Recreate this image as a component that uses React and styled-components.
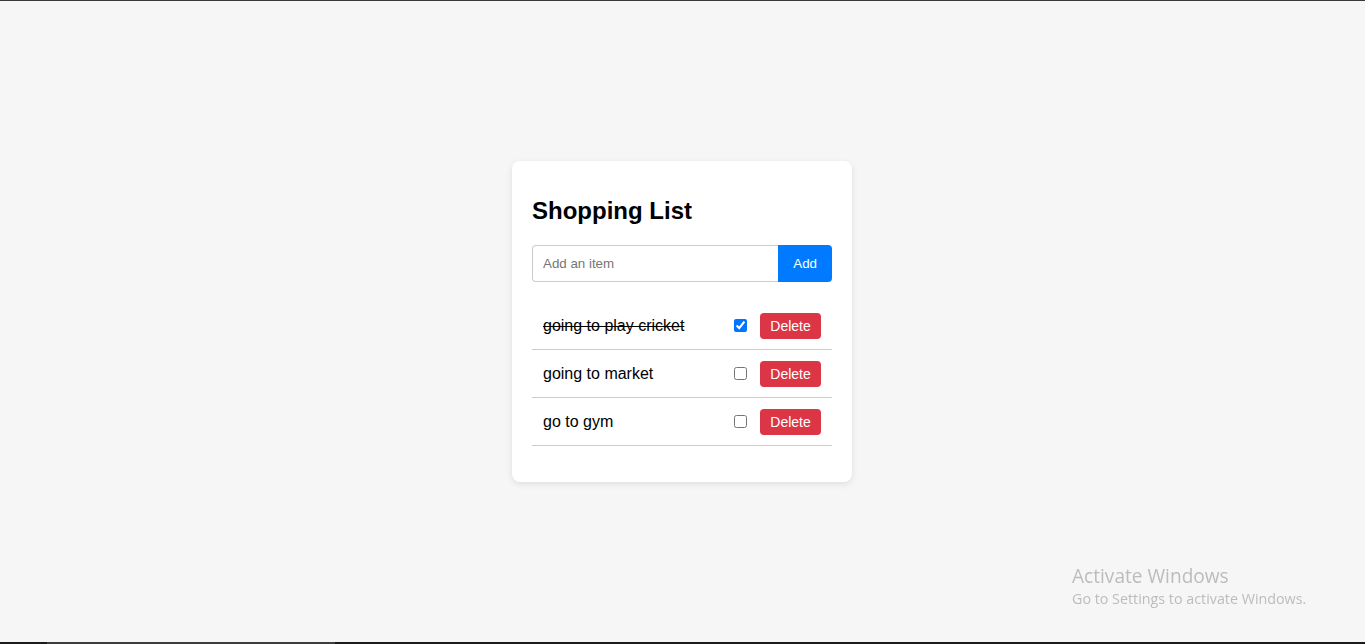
import React, { useState } from "react";
import styled, { createGlobalStyle } from "styled-components";

const Global = createGlobalStyle`
  * { box-sizing: border-box; }
  html, body { margin: 0; padding: 0; }
  body { background: #f6f6f6; font-family: "Liberation Sans", Arial, sans-serif; }
`;

const Screen = styled.div`
  height: 100vh;
  display: flex;
  flex-direction: column;
  background: #f6f6f6;
`;

const TopEdge = styled.div`
  height: 1px;
  background: #3a3a3a;
  flex: none;
`;

const BottomEdge = styled.div`
  height: 2px;
  flex: none;
  background: linear-gradient(to right, #1b1b1b 0 47px, #3e3e3e 47px 335px, #1b1b1b 335px);
`;

const Main = styled.main`
  flex: 1;
  display: flex;
  align-items: center;
  justify-content: center;
  padding: 0 1px 0 0;
`;

const Card = styled.div`
  width: 340px;
  background: #fff;
  border-radius: 8px;
  padding: 20px;
  box-shadow: 0 2px 6px rgba(0, 0, 0, 0.1);
`;

const Title = styled.h2`
  margin: 16px 0 20px;
  font-size: 24px;
  font-weight: bold;
  color: #000;
`;

const Form = styled.form`
  display: flex;
`;

const Input = styled.input`
  flex: 1;
  padding: 10px;
  font-family: "Liberation Sans", Arial, sans-serif;
  font-size: 13.33px;
  border: 1px solid #ccc;
  border-right: none;
  border-radius: 4px 0 0 4px;
  outline: none;
  color: #000;
  &::placeholder { color: #757575; }
`;

const AddButton = styled.button`
  padding: 10px 15px;
  border: none;
  background: #007bff;
  color: #fff;
  font-family: "Liberation Sans", Arial, sans-serif;
  font-size: 13.33px;
  border-radius: 0 4px 4px 0;
  cursor: pointer;
`;

const List = styled.ul`
  list-style: none;
  margin: 20px 0 16px;
  padding: 0;
`;

const Row = styled.li`
  display: flex;
  align-items: center;
  height: 48px;
  padding: 0 11px 0 10px;
  border-bottom: 1px solid #ccc;
`;

const ItemText = styled.span`
  flex: 1;
  font-size: 16px;
  color: #000;
  padding-left: 1px;
  text-decoration: ${(p) => (p.$done ? "line-through" : "none")};
`;

const Check = styled.input`
  width: 13px;
  height: 13px;
  margin: 3px 3px 3px 4px;
`;

const DeleteButton = styled.button`
  margin-left: 10px;
  width: 61px;
  height: 26px;
  padding: 0;
  border: none;
  border-radius: 4px;
  background: #dc3545;
  color: #fff;
  font-family: "Liberation Sans", Arial, sans-serif;
  font-size: 14px;
  cursor: pointer;
`;

const Watermark = styled.div`
  position: fixed;
  left: 1072px;
  top: 564px;
  color: #bcbcbc;
  font-family: "Open Sans", "Noto Sans", sans-serif;
  pointer-events: none;
`;

const WmTitle = styled.div`
  font-size: 19.1px;
  line-height: 25px;
`;

const WmSub = styled.div`
  font-size: 14.3px;
  line-height: 20px;
`;

export default function App() {
  const [items, setItems] = useState([
    { id: 1, text: "going to play cricket", done: true },
    { id: 2, text: "going to market", done: false },
    { id: 3, text: "go to gym", done: false },
  ]);
  const [value, setValue] = useState("");

  const add = (e) => {
    e.preventDefault();
    if (!value.trim()) return;
    setItems([...items, { id: Date.now(), text: value, done: false }]);
    setValue("");
  };

  return (
    <>
      <Global />
      <Screen>
        <TopEdge />
        <Main>
          <Card>
            <Title>Shopping List</Title>
            <Form onSubmit={add}>
              <Input
                placeholder="Add an item"
                value={value}
                onChange={(e) => setValue(e.target.value)}
              />
              <AddButton type="submit">Add</AddButton>
            </Form>
            <List>
              {items.map((it) => (
                <Row key={it.id}>
                  <ItemText $done={it.done}>{it.text}</ItemText>
                  <Check
                    type="checkbox"
                    checked={it.done}
                    onChange={() =>
                      setItems(items.map((x) => (x.id === it.id ? { ...x, done: !x.done } : x)))
                    }
                  />
                  <DeleteButton onClick={() => setItems(items.filter((x) => x.id !== it.id))}>
                    Delete
                  </DeleteButton>
                </Row>
              ))}
            </List>
          </Card>
        </Main>
        <BottomEdge />
      </Screen>
      <Watermark>
        <WmTitle>Activate Windows</WmTitle>
        <WmSub>Go to Settings to activate Windows.</WmSub>
      </Watermark>
    </>
  );
}
